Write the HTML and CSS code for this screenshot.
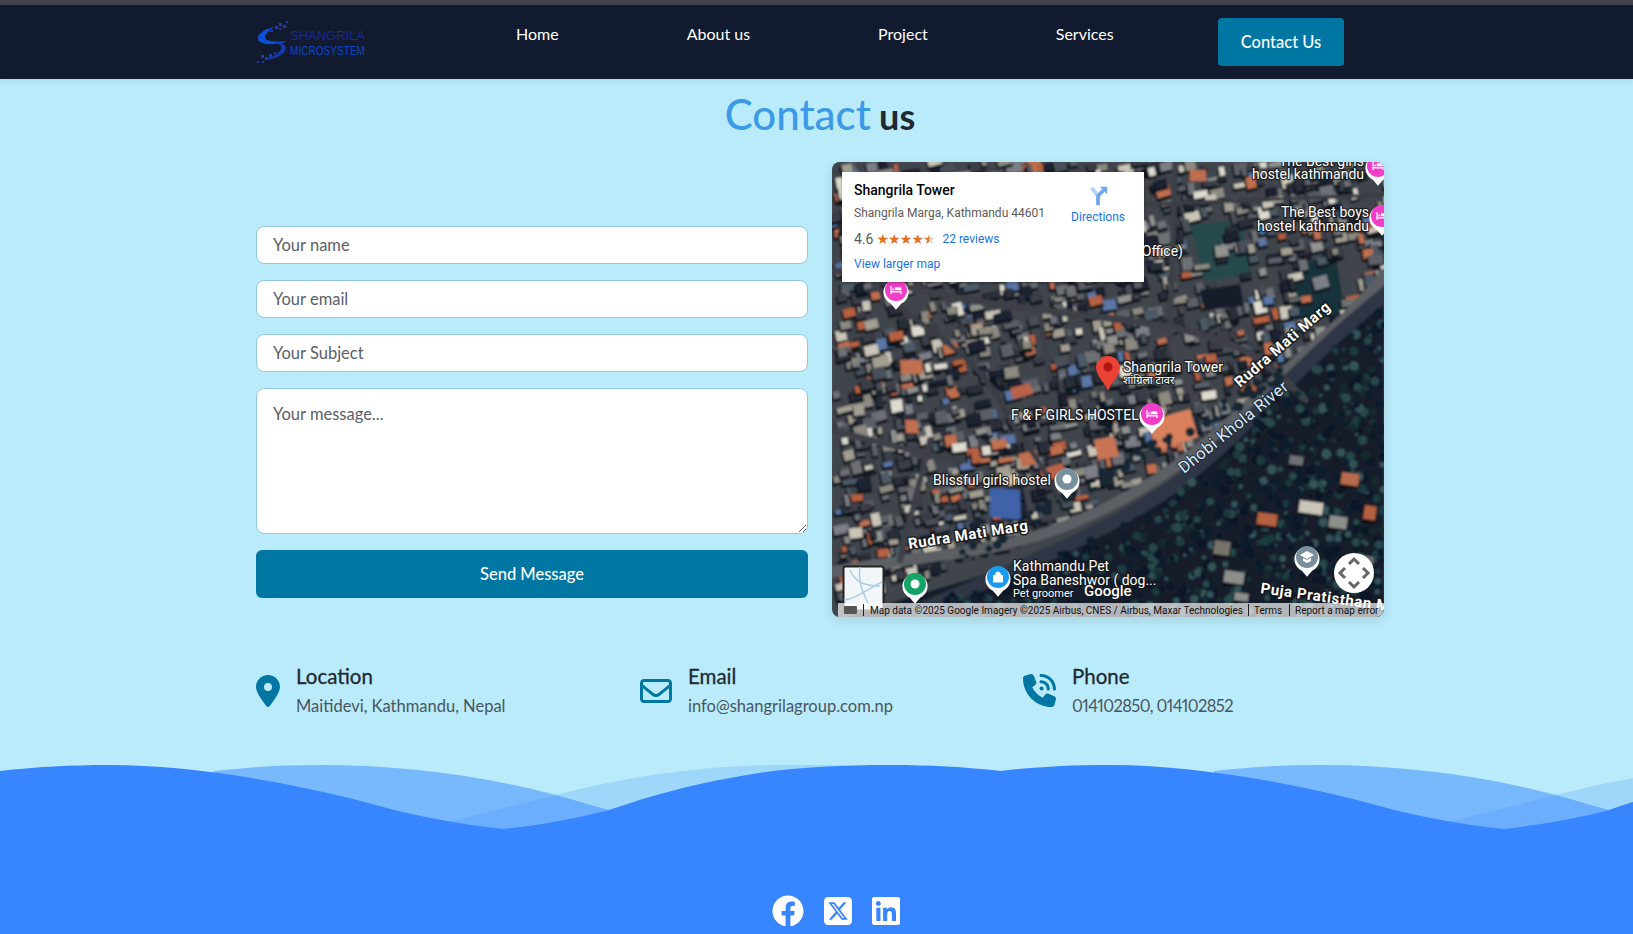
FILE: index.html
```html
<!DOCTYPE html>
<html lang="en">
<head>
<meta charset="utf-8">
<title>Contact us</title>
<link rel="stylesheet" href="styles.css">
</head>
<body>
<div class="topstrip"></div>
<header class="navbar">
  <div class="navbar-inner">
    <svg class="logo" viewBox="0 0 110 44" aria-label="Shangrila Microsystem">
      <path d="M18 7C8 9 1 14 2 19C3 23 10 25 18 24C24 23.500 29 23 30 21C26 22 16 22 11 20C7 18 9 13 18 7z" fill="#0b4fd6"/>
      <path d="M7 40C16 40 28 36 30 29C31 25 26 23 20 23C25 25 27 27 24 31C20 35 14 38 7 40z" fill="#1638b0"/>
      <g fill="#1a3cb8">
        <rect x="19" y="6" width="3" height="3"/><rect x="23" y="3" width="3" height="3"/><rect x="27" y="5" width="3" height="3"/>
        <rect x="30" y="1" width="2" height="2"/><rect x="23" y="8" width="2" height="2"/><rect x="14" y="10" width="3" height="2"/>
        <rect x="5" y="35" width="3" height="3"/><rect x="9" y="37" width="3" height="3"/><rect x="13" y="34" width="3" height="3"/>
        <rect x="1" y="41" width="2" height="2"/><rect x="6" y="41" width="2" height="2"/><rect x="18" y="32" width="2" height="2"/>
      </g>
      <text class="logo-a" x="34" y="20" textLength="75" lengthAdjust="spacingAndGlyphs">SHANGRILA</text>
      <text class="logo-b" x="34" y="35" textLength="75" lengthAdjust="spacingAndGlyphs">MICROSYSTEM</text>
    </svg>
    <nav class="navlinks">
      <a href="#">Home</a>
      <a href="#">About us</a>
      <a href="#">Project</a>
      <a href="#">Services</a>
    </nav>
    <a class="navcta" href="#">Contact Us</a>
  </div>
</header>

<main class="main">
  <h1 class="title"><span class="title-a">Contact</span> <span class="title-b">us</span></h1>
  <section class="contact-row">
    <form class="form">
      <input class="field" type="text" placeholder="Your name">
      <input class="field" type="email" placeholder="Your email">
      <input class="field" type="text" placeholder="Your Subject">
      <textarea class="field area" placeholder="Your message..."></textarea>
      <button class="send" type="button">Send Message</button>
    </form>

    <div class="map">
      <svg class="map-svg" viewBox="832 162 552 455" aria-label="Satellite map">
        <defs>
          <filter id="soft" x="0" y="0" width="100%" height="100%"><feGaussianBlur stdDeviation="0.9"/></filter>
          <symbol id="pin" viewBox="0 0 30 36" overflow="visible">
            <path d="M15 36l-5.500-6.500A13.500 13.500 0 1 1 20.500 29.500z" fill="#fff"/>
          </symbol>
          <symbol id="bed" viewBox="0 0 14 10">
            <path d="M0 0h1.500v6H14v4h-1.500V8h-11v2H0zM2.500 3h2v2h-2zM5.500 1.500H11a3 3 0 0 1 3 3V5H5.500z" fill="#fff"/>
          </symbol>
        </defs>
        <g id="sat" filter="url(#soft)"></g>

        <text class="m-lbl" x="1364" y="166" text-anchor="end">The Best girls</text>
        <text class="m-lbl" x="1364" y="179" text-anchor="end">hostel kathmandu</text>
        <text class="m-lbl" x="1369" y="217" text-anchor="end">The Best boys</text>
        <text class="m-lbl" x="1369" y="231" text-anchor="end">hostel kathmandu</text>
        <text class="m-lbl" x="1183" y="256" text-anchor="end">Office)</text>
        <text class="m-lbl" x="1123" y="372">Shangrila Tower</text>
        <text class="m-sm" x="1123" y="384">शांग्रिला टावर</text>
        <text class="m-lbl" x="1011" y="420">F &amp; F GIRLS HOSTEL</text>
        <text class="m-lbl" x="933" y="485">Blissful girls hostel</text>
        <text class="m-lbl" x="1013" y="571">Kathmandu Pet</text>
        <text class="m-lbl" x="1013" y="585">Spa Baneshwor ( dog...</text>
        <text class="m-sm" x="1013" y="597">Pet groomer</text>
        <text class="m-road" transform="translate(1240 388) rotate(-41)">Rudra Mati Marg</text>
        <text class="m-road" transform="translate(909 549) rotate(-9)">Rudra Mati Marg</text>
        <text class="m-road" transform="translate(1260 593) rotate(8)">Puja Pratisthan M</text>
        <text class="m-river" transform="translate(1184 474) rotate(-39)">Dhobi Khola River</text>
        <text class="m-google" x="1084" y="596">Google</text>

        <use href="#pin" x="882" y="276" width="28" height="34"/>
        <circle cx="896" cy="290" r="11" fill="#f23dc8"/>
        <use href="#bed" x="890" y="286" width="12" height="8"/>
        <use href="#pin" x="1364" y="152" width="28" height="34"/>
        <circle cx="1378" cy="166" r="11" fill="#f23dc8"/>
        <use href="#bed" x="1372" y="162" width="12" height="8"/>
        <use href="#pin" x="1368" y="202" width="28" height="34"/>
        <circle cx="1382" cy="216" r="11" fill="#f23dc8"/>
        <use href="#bed" x="1376" y="212" width="12" height="8"/>
        <use href="#pin" x="1138" y="400" width="28" height="34"/>
        <circle cx="1152" cy="414" r="11" fill="#f23dc8"/>
        <use href="#bed" x="1146" y="410" width="12" height="8"/>
        <use href="#pin" x="1053" y="465" width="28" height="34"/>
        <circle cx="1067" cy="479" r="11" fill="#78909c"/>
        <circle cx="1067" cy="479" r="4.500" fill="#fff"/>
        <use href="#pin" x="901" y="570" width="28" height="34"/>
        <circle cx="915" cy="584" r="11" fill="#12a567"/>
        <circle cx="915" cy="584" r="4.500" fill="#fff"/>
        <use href="#pin" x="984" y="563" width="28" height="34"/>
        <circle cx="998" cy="577" r="11" fill="#1a9bf0"/>
        <path d="M993.500 575.500h9v6.500h-9zM995.500 575a2.500 3 0 0 1 5 0" fill="#fff" stroke="#fff" stroke-width="1"/>
        <use href="#pin" x="1293" y="543" width="28" height="34"/>
        <circle cx="1307" cy="557" r="11" fill="#78909c"/>
        <path d="M1300 555l7-4 7 4-7 4zM1303 558v3l4 2 4-2v-3l-4 2z" fill="#fff"/>

        <path d="M1108 391c-3-8-11-14-12-23a12 12 0 1 1 24 0c-1 9-9 15-12 23z" fill="#ea4335"/>
        <circle cx="1108" cy="367" r="4.500" fill="#b31412"/>

        <rect class="thumb" x="843.500" y="566.500" width="40" height="44" rx="2"/>
        <path d="M844 600c12-1 22-10 38-18M850 570c5 12 14 16 30 16M860 567c-2 14 2 24 8 36" fill="none" stroke="#a9cfe8" stroke-width="1.500"/>

        <circle cx="1354" cy="573" r="20" fill="#fff"/>
        <path class="ctrl" d="M1349 564l5-5 5 5M1349 582l5 5 5-5M1345 568l-5 5 5 5M1363 568l5 5-5 5"/>

        <rect x="838" y="603" width="546" height="14" fill="#fff" fill-opacity=".68"/>
        <rect x="844" y="606" width="13" height="8" fill="#555" rx="1"/>
        <path d="M863.500 604v12M1248.500 604v12M1289.500 604v12" stroke="#222" stroke-width="1"/>
        <text class="m-attr" x="870" y="614">Map data ©2025 Google Imagery ©2025 Airbus, CNES / Airbus, Maxar Technologies</text>
        <text class="m-attr" x="1254" y="614">Terms</text>
        <text class="m-attr" x="1295" y="614">Report a map error</text>
      </svg>

      <div class="place-card">
        <div class="place-main">
          <div class="place-name">Shangrila Tower</div>
          <div class="place-addr">Shangrila Marga, Kathmandu 44601</div>
          <div class="place-rating">
            <span class="place-score">4.6</span>
            <span class="stars">★★★★<span class="star-half">★</span></span>
            <a class="place-link reviews" href="#">22 reviews</a>
          </div>
          <a class="place-link larger" href="#">View larger map</a>
        </div>
        <a class="place-dir" href="#">
          <svg class="dir-icon" viewBox="0 0 24 24">
            <path d="M5 3l7 9" fill="none" stroke="#b5d3f8" stroke-width="4"/>
            <path d="M12 22v-8c0-3 2-5 6-8" fill="none" stroke="#6ba6ee" stroke-width="4"/>
            <path d="M14 2h8v8z" fill="#6ba6ee"/>
          </svg>
          <span class="place-link">Directions</span>
        </a>
      </div>
    </div>
  </section>

  <section class="info-row">
    <div class="info">
      <svg class="info-icon icon-loc" viewBox="0 0 384 512"><path d="M215.700 499.200C267 435 384 279.400 384 192C384 86 298 0 192 0S0 86 0 192c0 87.400 117 243 168.300 307.200c12.300 15.300 35.100 15.300 47.400 0zM192 128a64 64 0 1 1 0 128 64 64 0 1 1 0-128z"/></svg>
      <div>
        <h3 class="info-title">Location</h3>
        <p class="info-text">Maitidevi, Kathmandu, Nepal</p>
      </div>
    </div>
    <div class="info">
      <svg class="info-icon icon-mail" viewBox="0 0 512 512"><path d="M64 112c-8.800 0-16 7.200-16 16v22.100L220.500 291.700c20.700 17 50.400 17 71.100 0L464 150.100V128c0-8.800-7.200-16-16-16H64zM48 212.200V384c0 8.800 7.200 16 16 16H448c8.800 0 16-7.200 16-16V212.200L322 328.800c-38.400 31.500-93.700 31.500-132 0L48 212.200zM0 128C0 92.700 28.700 64 64 64H448c35.300 0 64 28.700 64 64V384c0 35.300-28.700 64-64 64H64c-35.300 0-64-28.700-64-64V128z"/></svg>
      <div>
        <h3 class="info-title">Email</h3>
        <p class="info-text">info@shangrilagroup.com.np</p>
      </div>
    </div>
    <div class="info">
      <svg class="info-icon icon-phone" viewBox="0 0 512 512"><path d="M280 0C408.100 0 512 103.900 512 232c0 13.300-10.700 24-24 24s-24-10.700-24-24c0-101.600-82.400-184-184-184c-13.300 0-24-10.700-24-24s10.700-24 24-24zm8 192a32 32 0 1 1 0 64 32 32 0 1 1 0-64zm-32-72c0-13.300 10.700-24 24-24c75.100 0 136 60.900 136 136c0 13.300-10.700 24-24 24s-24-10.700-24-24c0-48.600-39.400-88-88-88c-13.300 0-24-10.700-24-24zM117.500 1.400c19.400-5.300 39.700 4.600 47.400 23.200l40 96c6.800 16.300 2.100 35.200-11.600 46.300L144 207.300c33.300 70.400 90.300 127.400 160.700 160.700L345 318.700c11.200-13.700 30-18.400 46.300-11.600l96 40c18.600 7.700 28.500 28 23.200 47.400l-24 88C481.800 499.900 466 512 448 512C200.600 512 0 311.400 0 64C0 46 12.100 30.200 29.500 25.400l88-24z"/></svg>
      <div>
        <h3 class="info-title">Phone</h3>
        <p class="info-text info-digits">014102850, 014102852</p>
      </div>
    </div>
  </section>
</main>

<footer class="footer">
  <svg class="waves" viewBox="0 760 1633 80" preserveAspectRatio="none" aria-hidden="true">
    <defs>
      <path id="w-light" d="M451 821C490 812 525 803 556 795C620 778 700 765 780 765C820 765 860 765 900 767L900 840L451 840Z"/>
      <path id="w-mid" d="M214 771C250 767 285 765 321 765C400 765 480 775 556 795C575 800 590 805 609 810L609 840L214 840Z"/>
      <path id="w-dark" d="M0 771C35 767 70 765 110 765C180 765 270 778 357 800C410 815 455 824 504 829C540 825 575 819 609 810C650 796 690 785 730 778C780 768 830 765 890 765C930 765 965 767 1001 771L1001 840L0 840Z"/>
    </defs>
    <g class="wave-light"><use href="#w-light"/><use href="#w-light" x="1000"/></g>
    <g class="wave-mid"><use href="#w-mid"/><use href="#w-mid" x="1000"/></g>
    <g class="wave-dark"><use href="#w-dark"/><use href="#w-dark" x="1000"/></g>
  </svg>
  <div class="footer-body">
    <a class="social" href="#" aria-label="Facebook"><svg class="social-fb" viewBox="0 0 512 512"><path d="M504 256C504 119 393 8 256 8S8 119 8 256c0 123.780 90.690 226.380 209.250 245V327.690h-63V256h63v-54.640c0-62.150 37-96.480 93.670-96.480 27.140 0 55.520 4.840 55.520 4.840v61h-31.280c-30.800 0-40.410 19.120-40.410 38.730V256h68.780l-11 71.690h-57.780V501C413.310 482.380 504 379.780 504 256z"/></svg></a>
    <a class="social" href="#" aria-label="X"><svg class="social-sq" viewBox="0 32 448 448"><path d="M64 32C28.700 32 0 60.700 0 96V416c0 35.300 28.700 64 64 64H384c35.300 0 64-28.700 64-64V96c0-35.300-28.700-64-64-64H64zm297.100 84L257.300 234.600 379.400 396H283.800L209 298.100 123.300 396H75.800l111-126.900L69.700 116h98l67.700 89.500L313.600 116h47.500zM323.300 367.600L153.400 142.900H125.100L296.900 367.600h26.300z"/></svg></a>
    <a class="social" href="#" aria-label="LinkedIn"><svg class="social-sq" viewBox="0 32 448 448"><path d="M416 32H31.900C14.300 32 0 46.500 0 64.300v383.400C0 465.500 14.300 480 31.900 480H416c17.600 0 32-14.500 32-32.300V64.300c0-17.800-14.400-32.300-32-32.300zM135.400 416H69V202.200h66.500V416zm-33.200-243c-21.300 0-38.500-17.300-38.500-38.500S80.900 96 102.200 96c21.200 0 38.500 17.300 38.500 38.500 0 21.300-17.200 38.500-38.500 38.500zm282.100 243h-66.400V312c0-24.800-.5-56.700-34.500-56.700-34.600 0-39.900 27-39.900 54.900V416h-66.400V202.200h63.700v29.200h.9c8.900-16.800 30.600-34.500 62.900-34.500 67.200 0 79.700 44.300 79.700 101.900V416z"/></svg></a>
  </div>
</footer>
<script src="map.js"></script>
</body>
</html>
```
FILE: styles.css
```css
* { box-sizing: border-box; }
html, body { margin: 0; padding: 0; }
html { overflow: hidden; }
body {
  height: 934px;
  overflow: hidden;
  background: #b9ebfa;
  font-family: Lato, "Open Sans", sans-serif;
  color: #1f2933;
}
.topstrip { height: 5px; background: #434349; }

.navbar { height: 74px; background: #111a2e; box-shadow: 0 2px 6px rgba(0, 0, 0, .08); }
.navbar-inner {
  width: 1088px;
  margin-left: 256px;
  height: 100%;
  display: flex;
  align-items: flex-start;
  justify-content: space-between;
}
.logo { width: 110px; height: 44px; margin-top: 15px; flex: none; }
.logo-a { font: 13px "Liberation Sans", sans-serif; fill: #1a2a8f; }
.logo-b { font: 13px "Liberation Sans", sans-serif; fill: #0b46c9; }
.navlinks { display: flex; gap: 128px; margin-left: 150px; margin-right: auto; padding-top: 18px; }
.navlinks a { color: #fff; text-decoration: none; font-size: 16px; line-height: 22px; }
.navcta {
  width: 126px;
  height: 48px;
  margin-top: 13px;
  display: flex;
  align-items: center;
  justify-content: center;
  background: #0077a3;
  border-radius: 4px;
  color: #fff;
  text-decoration: none;
  font-size: 16.500px;
  font-weight: 500;
}

.main { padding-left: 256px; }
.title { margin: 11px 0 20px; width: 1128px; text-align: center; line-height: 48px; font-weight: 400; }
.title-a { font-size: 42px; font-weight: 500; color: #3b9ae8; }
.title-b { font-size: 36px; font-weight: 700; color: #1f2933; }

.contact-row { display: flex; gap: 24px; align-items: flex-start; }
.form { width: 552px; padding-top: 64px; display: flex; flex-direction: column; gap: 16px; }
.field {
  display: block;
  width: 100%;
  height: 38px;
  padding: 0 16px;
  border: 1px solid #93c9e0;
  border-radius: 8px;
  background: #fff;
  font: 16.500px Lato, sans-serif;
  color: #333;
  outline: none;
}
.field::placeholder { color: #5a6068; opacity: 1; }
.area { height: 146px; padding-top: 15px; resize: vertical; }
.send {
  height: 48px;
  border: 0;
  border-radius: 6px;
  background: #0077a3;
  color: #fff;
  font: 500 16.500px Lato, sans-serif;
}

.map {
  position: relative;
  width: 552px;
  height: 455px;
  border-radius: 8px;
  overflow: hidden;
  box-shadow: 0 4px 12px rgba(0, 0, 0, .1);
  background: #4f5359;
}
.map-svg { display: block; width: 552px; height: 455px; }
.m-lbl, .m-sm, .m-road, .m-river, .m-google {
  font-family: Roboto, sans-serif;
  fill: #fff;
  paint-order: stroke;
  stroke: rgba(20, 20, 20, .75);
  stroke-linejoin: round;
}
.m-lbl { font-size: 14px; stroke-width: 2.500px; }
.m-sm { font-size: 11px; stroke-width: 2px; font-family: Roboto, "Noto Sans", sans-serif; }
.m-road { font-size: 15px; font-weight: 700; stroke-width: 3px; letter-spacing: .6px; }
.m-river { font-size: 16.500px; fill: #d5e8f5; stroke: rgba(20, 30, 50, .7); stroke-width: 2px; letter-spacing: .4px; }
.m-google { font-size: 15px; font-weight: 500; stroke-width: 1.500px; }
.m-attr { font: 10px Roboto, sans-serif; fill: #111; }
.thumb { fill: #f3f6f8; stroke: #222; stroke-width: 2px; }
.ctrl { fill: none; stroke: #666; stroke-width: 3px; }

.place-card {
  position: absolute;
  left: 10px;
  top: 10px;
  width: 302px;
  height: 110px;
  background: #fff;
  display: flex;
  justify-content: space-between;
  padding: 10px 12px;
  font-family: Roboto, sans-serif;
  box-shadow: 0 1px 3px rgba(0, 0, 0, .3);
}
.place-main { display: flex; flex-direction: column; align-items: flex-start; }
.place-name { font-size: 14px; font-weight: 500; line-height: 17px; color: #000; }
.place-addr { font-size: 12px; line-height: 16px; margin-top: 6px; color: #5b5b5b; }
.place-rating { display: flex; align-items: center; margin-top: 9px; height: 18px; }
.place-score { font-size: 14px; color: #5b5b5b; margin-right: 3px; }
.stars { font: 14px "DejaVu Sans", sans-serif; letter-spacing: -.9px; color: #e7711b; width: 66px; line-height: 1; }
.star-half {
  background: linear-gradient(90deg, #e7711b 50%, #d0d0d0 50%);
  -webkit-background-clip: text;
  background-clip: text;
  color: transparent;
}
.place-link { font-size: 12px; color: #1a73e8; text-decoration: none; line-height: 16px; }
.larger { margin-top: 9px; }
.place-dir {
  display: flex;
  flex-direction: column;
  align-items: center;
  text-decoration: none;
  margin: 3px 7px 0 0;
  gap: 2px;
}
.dir-icon { width: 22px; height: 22px; }

.info-row { display: grid; grid-template-columns: 384px 383px 384px; margin-top: 46px; }
.info { display: flex; align-items: center; }
.info-icon { fill: #0077a3; flex: none; }
.icon-loc { width: 24px; height: 32px; margin-right: 16px; }
.icon-mail { width: 32px; height: 32px; margin-right: 16px; }
.icon-phone { width: 33px; height: 33px; margin-right: 16px; }
.info-title { margin: 0; font-size: 20.500px; line-height: 26px; font-weight: 400; -webkit-text-stroke: .3px currentColor; color: #1f2933; }
.info-text { margin: 5px 0 0; font-size: 16.500px; line-height: 24px; color: #4a5560; }
.info-digits { font-variant-numeric: proportional-nums; letter-spacing: -.6px; }

.footer { margin-top: 42px; }
.waves { display: block; width: 1633px; height: 80px; }
.wave-light { fill: #3785ff; fill-opacity: .2; }
.wave-mid { fill: #3785ff; fill-opacity: .5; }
.wave-dark { fill: #3785ff; }
.footer-body {
  height: 95px;
  background: #3785ff;
  display: flex;
  justify-content: center;
  align-items: flex-start;
  gap: 20px;
  padding: 55px 0 0 39px;
}
.social { display: block; height: 32px; }
.social svg { display: block; fill: #fff; }
.social-fb { width: 32px; height: 32px; }
.social-sq { width: 28px; height: 28px; margin-top: 2px; }
```
FILE: map.js
```js
// Paints the satellite imagery behind the map labels from a seeded generator.
(function () {
  var NS = "http://www.w3.org/2000/svg";
  var root = document.getElementById("sat");
  var seed = 90210;
  function rnd() {
    seed = (seed + 0x6d2b79f5) | 0;
    var t = Math.imul(seed ^ (seed >>> 15), 1 | seed);
    t = (t + Math.imul(t ^ (t >>> 7), 61 | t)) ^ t;
    return ((t ^ (t >>> 14)) >>> 0) / 4294967296;
  }
  function add(tag, attrs) {
    var el = document.createElementNS(NS, tag);
    for (var k in attrs) el.setAttribute(k, attrs[k]);
    root.appendChild(el);
    return el;
  }
  function pick(a) { return a[Math.floor(rnd() * a.length)]; }

  var river = [[832, 622], [900, 600], [1000, 570], [1100, 525], [1200, 468], [1280, 385], [1384, 300]];
  function riverY(x) {
    for (var i = 0; i < river.length - 1; i++) {
      var a = river[i], b = river[i + 1];
      if (x >= a[0] && x <= b[0]) return a[1] + (b[1] - a[1]) * (x - a[0]) / (b[0] - a[0]);
    }
    return 300;
  }

  add("rect", { x: 832, y: 162, width: 552, height: 455, fill: "#41454c" });
  add("path", { d: "M832 622L900 600L1000 570L1100 525L1200 468L1280 385L1384 300V630H832Z", fill: "#131f2b" });

  var i, x, y;
  // shaded green patches, under the houses
  [["M1190 225l50-5 12 55-48 6z", "#27484c"], ["M1290 268l45-15 10 60-48 12z", "#16303a"]].forEach(function (p) { add("path", { d: p[0], fill: p[1] }); });
  // houses
  var roofs = ["#6d7174", "#8b8980", "#5c6066", "#7b7f86", "#3b3e46", "#2a2e38", "#4a5058", "#6d7174", "#8b8980", "#5c6066",
    "#3b3e46", "#2a2e38", "#a29e92", "#c9c5b8", "#b5603f", "#c06f50", "#5a76a6", "#90938f", "#dedbd0", "#1d2230", "#1d2230", "#4e5a66"];
  for (i = 0; i < 2300; i++) {
    x = 826 + rnd() * 562; y = 158 + rnd() * 460;
    if (y > riverY(x) - 24) continue;
    var inGreen = x > 1190 && x < 1250 && y > 225 && y < 280 || x > 1290 && x < 1345 && y > 262 && y < 320;
    if (inGreen && rnd() < .7) continue;
    var w = 4 + rnd() * 12, h = 4 + rnd() * 9, a = -16 + rnd() * 10;
    var tr = "rotate(" + a.toFixed(1) + " " + x.toFixed(1) + " " + y.toFixed(1) + ")";
    add("rect", { x: x - 2, y: y + 1, width: w + 2, height: h + 2, fill: "#0f131d", transform: tr });
    add("rect", { x: x, y: y, width: w, height: h, fill: pick(roofs), transform: tr });
  }
  // special roofs
  [["M1200 290l40-6 4 22-40 4z", "#151d2a"],
   ["M1148 421l42-12 8 28-42 15z", "#d9805c"], ["M990 488l30 2 1 30-31-3z", "#3f62a8"], ["M1100 404l16 2-3 22-16-2z", "#111724"],
   ["M1040 470l22-7 5 12-23 7z", "#b9624a"], ["M1094 440l20-4 5 20-21 4z", "#c97454"], ["M1190 170l16 0 0 11-16 0z", "#bf6d50"],
   ["M1010 388l20-5 3 11-20 5z", "#b9624a"], ["M905 420l12 0 2 13-13 0z", "#c06f50"], ["M900 360l22 0 1 14-22 0z", "#c06f50"],
   ["M1018 454l18-4 4 13-18 4z", "#c06f50"]].forEach(function (p) { add("path", { d: p[0], fill: p[1] }); });
  // roads
  function road(d, w, c) { add("path", { d: d, fill: "none", stroke: c || "#3d4047", "stroke-width": w, "stroke-linecap": "round", "stroke-linejoin": "round" }); }
  road("M832 572C920 555 1000 555 1080 520C1160 485 1200 450 1260 395C1300 355 1350 320 1384 275", 11, "#5c5f64");
  road("M905 617C1000 575 1090 540 1160 495C1230 450 1290 370 1384 295", 14, "#2f3645");
  road("M832 270C880 280 950 300 1040 310C1120 320 1210 325 1260 360C1285 378 1300 395 1305 400", 7);
  road("M1175 162L1170 340", 6);
  road("M880 290C920 330 980 350 1010 420C1030 450 1040 460 1060 500", 5, "#3a3d44");
  road("M832 430C870 440 910 450 960 462", 6);
  road("M930 440L900 560", 6);
  road("M1260 170L1380 160M1130 205L1384 195", 4, "#3a3d44");
  road("M1040 310L1050 380", 4);

  // forest canopy
  for (i = 0; i < 2600; i++) {
    x = 832 + rnd() * 552; y = 290 + rnd() * 330;
    if (y < riverY(x) + 8) continue;
    add("circle", { cx: x, cy: y, r: 1.5 + rnd() * 3.5, fill: pick(["#1c3a40", "#0e1c2b", "#27484c", "#12292f", "#0a1626", "#0e1c2b", "#0a1626", "#34545a"]) });
  }
  // trees along the road
  for (i = 0; i < 90; i++) {
    var t = rnd();
    x = 960 + t * 330; y = 560 - t * 190 + (rnd() - .5) * 14;
    add("circle", { cx: x, cy: y, r: 2 + rnd() * 3, fill: "#142833" });
  }
  // houses among the trees
  [[1342, 472, 18, 12, "#b96a4e"], [1300, 500, 24, 12, "#c9c5b8"], [1258, 512, 20, 12, "#b5603f"], [1215, 540, 16, 14, "#77736a"],
   [1330, 515, 18, 12, "#8d8f8c"], [1365, 505, 12, 14, "#b5603f"], [1225, 570, 20, 12, "#8d8f8c"], [1290, 455, 14, 9, "#6d7174"],
   [1360, 555, 14, 10, "#6d7174"], [1235, 592, 14, 8, "#8d8f8c"]].forEach(function (b) {
    add("rect", { x: b[0] - 2, y: b[1] + 2, width: b[2] + 2, height: b[3] + 2, fill: "#0a1018" });
    add("rect", { x: b[0], y: b[1], width: b[2], height: b[3], fill: b[4], transform: "rotate(8 " + b[0] + " " + b[1] + ")" });
  });
})();
```
